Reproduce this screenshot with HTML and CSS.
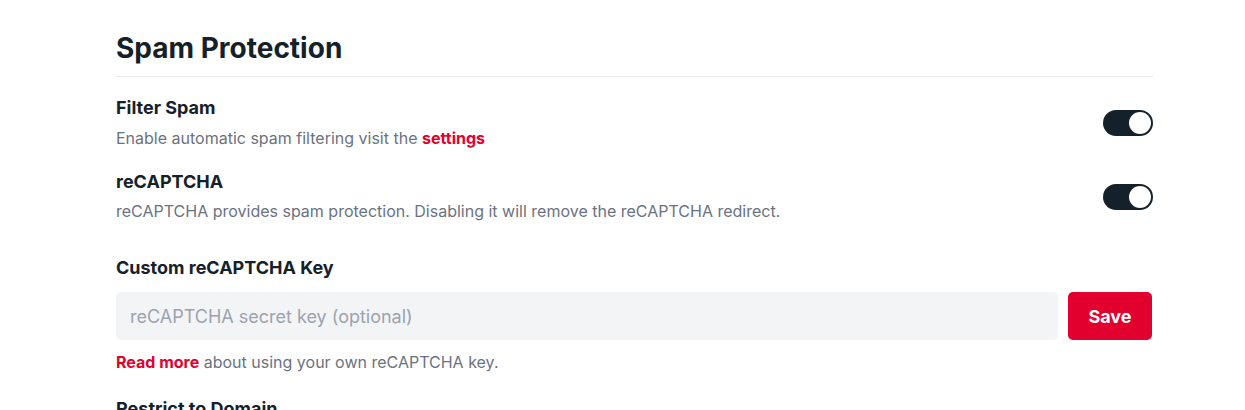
FILE: index.html
```html
<!DOCTYPE html>
<html lang="en">
<head>
<meta charset="utf-8">
<title>Spam Protection</title>
<link rel="stylesheet" href="styles.css">
</head>
<body>
<main class="page">
  <h1 class="title">Spam Protection</h1>
  <div class="setting">
    <div class="setting-text">
      <h3 class="label">Filter Spam</h3>
      <p class="desc">Enable automatic spam filtering visit the <a class="link" href="#">settings</a></p>
    </div>
    <span class="toggle on"><span class="knob"></span></span>
  </div>
  <div class="setting">
    <div class="setting-text">
      <h3 class="label">reCAPTCHA</h3>
      <p class="desc">reCAPTCHA provides spam protection. Disabling it will remove the reCAPTCHA redirect.</p>
    </div>
    <span class="toggle on"><span class="knob"></span></span>
  </div>
  <div class="field">
    <h3 class="label">Custom reCAPTCHA Key</h3>
    <div class="input-row">
      <input class="input" type="text" placeholder="reCAPTCHA secret key (optional)">
      <button class="btn">Save</button>
    </div>
    <p class="desc note"><a class="link" href="#">Read more</a> about using your own reCAPTCHA key.</p>
  </div>
  <div class="field last">
    <h3 class="label">Restrict to Domain</h3>
  </div>
</main>
</body>
</html>
```

FILE: styles.css
```css
* { box-sizing: border-box; }
html, body { margin: 0; padding: 0; background: #fff; }
body {
  font-family: Inter, "Noto Sans", sans-serif;
  color: #15212a;
  -webkit-font-smoothing: antialiased;
}
.page {
  width: 1037px;
  margin-left: 116px;
  padding-top: 30px;
}
.title {
  margin: 0;
  font-size: 28px;
  line-height: 36px;
  font-weight: 700;
  padding-bottom: 10px;
  border-bottom: 1px solid #e5e7eb;
}
.setting {
  display: flex;
  align-items: center;
  justify-content: space-between;
  margin-top: 19px;
}
.setting + .setting { margin-top: 20px; }
.label {
  margin: 0;
  font-size: 18px;
  line-height: 24px;
  font-weight: 700;
}
.desc {
  margin: 6px 0 0;
  font-size: 16px;
  line-height: 24px;
  color: #6b7280;
}
.setting + .setting .desc { margin-top: 5px; }
.link {
  color: #e2002f;
  font-weight: 700;
  text-decoration: none;
}
.toggle {
  width: 50px;
  height: 26px;
  border-radius: 13px;
  background: #15212a;
  display: flex;
  align-items: center;
  justify-content: flex-end;
  padding: 2px;
  flex-shrink: 0;
}
.knob {
  width: 22px;
  height: 22px;
  border-radius: 50%;
  background: #fff;
}
.field { margin-top: 33px; }
.field.last { margin-top: 23px; }
.input-row {
  display: flex;
  gap: 10px;
  margin-top: 12px;
}
.input {
  flex: 1;
  height: 48px;
  border: 0;
  border-radius: 5px;
  background: #f3f4f6;
  padding: 0 14px;
  font-family: inherit;
  font-size: 18px;
  color: #15212a;
  outline: none;
}
.input::placeholder { color: #9ca3af; }
.btn {
  width: 84px;
  height: 48px;
  border: 0;
  border-radius: 5px;
  background: #e2002f;
  color: #fff;
  font-family: inherit;
  font-size: 18px;
  font-weight: 700;
  margin-right: 1px;
}
.note { margin-top: 10px; }
```
